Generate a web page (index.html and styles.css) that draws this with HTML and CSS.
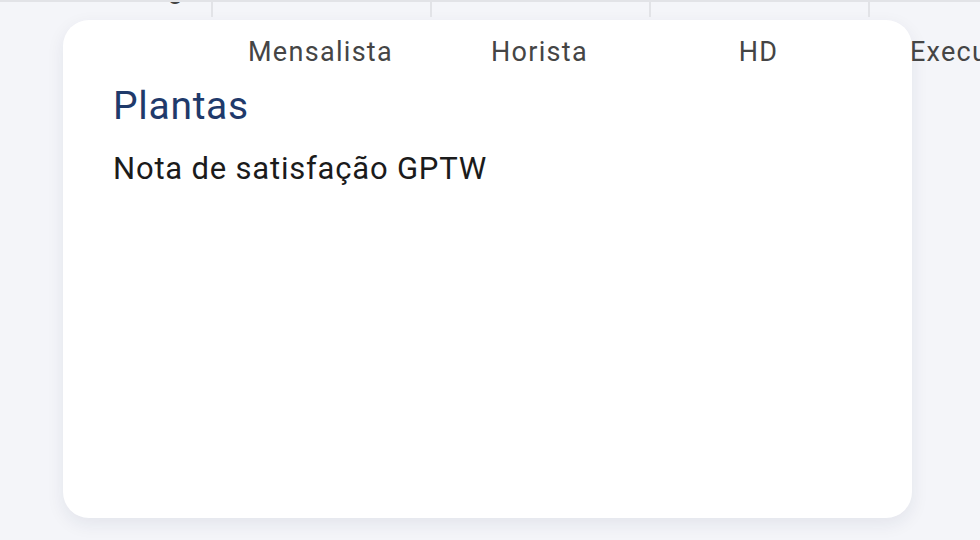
FILE: index.html
```html
<!DOCTYPE html>
<html lang="pt-BR">
<head>
<meta charset="utf-8">
<title>Plantas</title>
<link rel="stylesheet" href="styles.css">
</head>
<body>
  <div class="page">
    <div class="strip">
      <div class="strip-label">Ranking</div>
      <div class="strip-cell"></div>
      <div class="strip-cell"></div>
      <div class="strip-cell"></div>
      <div class="strip-cell"></div>
    </div>
    <section class="card">
      <div class="col-head">
        <span class="col-spacer"></span>
        <span class="col">Mensalista</span>
        <span class="col">Horista</span>
        <span class="col">HD</span>
        <span class="col">Executivo</span>
      </div>
      <h2 class="title">Plantas</h2>
      <p class="metric">Nota de satisfação GPTW</p>
    </section>
  </div>
</body>
</html>
```
FILE: styles.css
```css
* { box-sizing: border-box; }
html, body {
  margin: 0;
  padding: 0;
  background: #f4f5f9;
  overflow: hidden;
  font-family: Roboto, "Liberation Sans", Arial, sans-serif;
}
.page {
  width: 980px;
  height: 540px;
  overflow: hidden;
}
.strip {
  display: flex;
  height: 17px;
  overflow: hidden;
  border-top: 2px solid #e2e3e7;
  align-items: flex-start;
}
.strip-label {
  flex: 0 0 211px;
  text-align: right;
  padding-right: 27px;
  font-size: 27px;
  line-height: 27px;
  margin-top: -26px;
  color: #444;
  letter-spacing: 1px;
}
.strip-cell {
  flex: 0 0 219px;
  height: 15px;
  border-left: 2px solid #e2e3e7;
}
.card {
  margin: 3px 0 0 63px;
  width: 849px;
  height: 498px;
  background: #fff;
  border-radius: 26px;
  box-shadow: 0 6px 18px rgba(30, 40, 80, 0.08);
  padding: 16px 0 0 50px;
}
.col-head {
  display: grid;
  grid-template-columns: 98px repeat(4, 219px);
  width: 974px;
  font-size: 27px;
  line-height: 32px;
  color: #454545;
  letter-spacing: 1.3px;
}
.col { text-align: center; }
.col:last-child { margin-left: -8px; }
.title {
  margin: 16px 0 0;
  font-size: 39px;
  line-height: 45px;
  font-weight: 400;
  color: #1f3a6b;
  letter-spacing: 0.7px;
}
.metric {
  margin: 22px 0 0;
  font-size: 31px;
  line-height: 36px;
  color: #1b1b1b;
  letter-spacing: 0.8px;
}
```
